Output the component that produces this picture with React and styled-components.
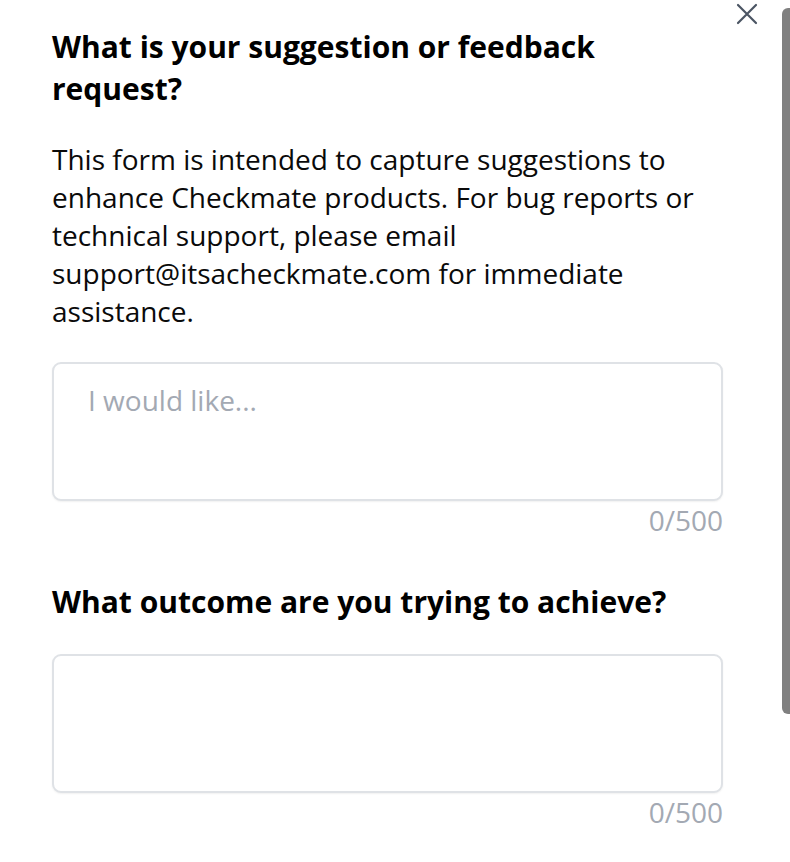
import styled, { createGlobalStyle } from 'styled-components'

const GlobalStyle = createGlobalStyle`
    html, body {
        margin: 0;
        padding: 0;
        background: #ffffff;
        font-family: "Open Sans", "Liberation Sans", sans-serif;
        color: #000000;
        overflow: hidden;
    }
`

function Field(props) {
    return (
        <FieldWrap>
            <TextBox placeholder={props.placeholder} maxLength={500} />
            <Counter>0/500</Counter>
        </FieldWrap>
    )
}

function App() {
    return (
        <>
            <GlobalStyle />
            <Modal>
                <CloseButton aria-label="Close">
                    <svg width="22" height="22" viewBox="0 0 22 22" fill="none">
                        <path d="M2 2L20 20M20 2L2 20" stroke="#4b5563" strokeWidth="2.2" strokeLinecap="round" />
                    </svg>
                </CloseButton>
                <Form>
                    <Question>What is your suggestion or feedback request?</Question>
                    <Intro>
                        This form is intended to capture suggestions to enhance Checkmate products. For bug reports or technical support, please email support@itsacheckmate.com for immediate assistance.
                    </Intro>
                    <Field placeholder="I would like..." />
                    <Question $spaced>What outcome are you trying to achieve?</Question>
                    <Field />
                </Form>
                <ScrollThumb />
            </Modal>
        </>
    )
}

export default App

const Modal = styled.div`
    position: relative;
    width: 790px;
    height: 862px;
    overflow: hidden;
    background: #ffffff;
`

const Form = styled.div`
    display: flex;
    flex-direction: column;
    width: 671px;
    padding: 26px 0 0 52px;
`

const Question = styled.h2`
    margin: ${props => props.$spaced ? '46px 0 31px' : '0 0 30px'};
    font-size: 30px;
    line-height: 42px;
    font-weight: 700;
    color: #000000;
`

const Intro = styled.p`
    margin: 0 0 32px;
    font-size: 28px;
    line-height: 38px;
    color: #0a0a0a;
`

const FieldWrap = styled.div`
    display: flex;
    flex-direction: column;
`

const TextBox = styled.textarea`
    box-sizing: border-box;
    height: 139px;
    padding: 19px 34px;
    border: 2px solid #dfe2e6;
    border-radius: 9px;
    box-shadow: 0 1px 2px rgba(0, 0, 0, 0.06);
    font-family: "Open Sans", "Liberation Sans", sans-serif;
    font-size: 28px;
    line-height: 34px;
    color: #111111;
    resize: none;
    outline: none;

    &::placeholder {
        color: #a3a9b3;
    }
`

const Counter = styled.span`
    align-self: flex-end;
    margin-top: 4px;
    font-size: 28px;
    line-height: 30px;
    color: #a3a9b3;
`

const CloseButton = styled.button`
    position: absolute;
    top: 1px;
    right: 30px;
    width: 26px;
    height: 26px;
    padding: 2px;
    border: none;
    background: transparent;
    cursor: pointer;
`

const ScrollThumb = styled.div`
    position: absolute;
    top: 8px;
    right: 0;
    width: 8px;
    height: 706px;
    border-radius: 6px 0 0 6px;
    background: #808080;
`
